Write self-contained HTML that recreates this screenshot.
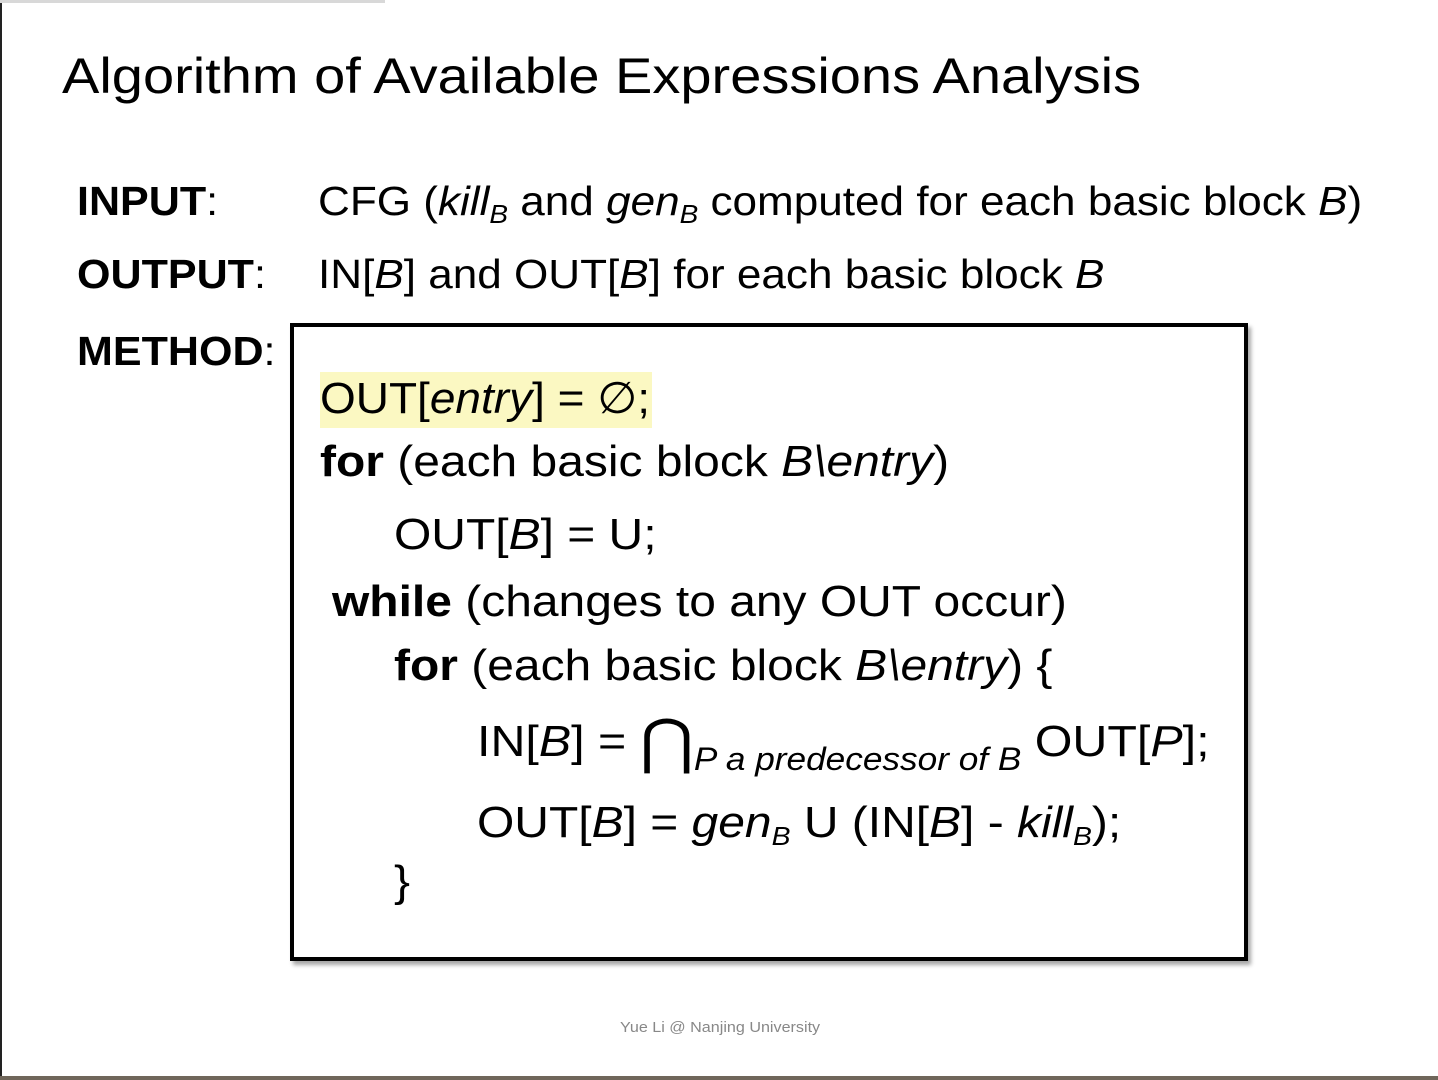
<!DOCTYPE html>
<html><head><meta charset="utf-8"><style>
body{margin:0;width:1438px;height:1080px;background:#fff;position:relative;overflow:hidden;font-family:"Liberation Sans",Arial,sans-serif;color:#000}
.a{position:absolute;white-space:nowrap;line-height:1;transform-origin:0 50%}
.t{font-size:50px;left:62px;top:51px;transform:scaleX(1.12)}
.l{font-size:41px;font-weight:bold;left:77px;transform:scaleX(1.05)}
.v{font-size:41px;left:318px;transform:scaleX(1.075)}
.c{font-size:44px;transform:scaleX(1.09)}
sub{font-size:26px;vertical-align:-8px;line-height:0}
i{font-style:italic}
</style></head><body>
<div style="position:absolute;left:0;top:0;width:2px;height:1080px;background:#222"></div>
<div style="position:absolute;left:0;top:1076px;width:1438px;height:4px;background:#6f665a"></div>
<div style="position:absolute;left:0;top:0;width:385px;height:3px;background:#d8d8d8"></div>
<div class="a t">Algorithm of Available Expressions Analysis</div>
<div class="a l" style="top:181px">INPUT<span style="font-weight:normal">:</span></div>
<div class="a v" style="top:181px">CFG (<i>kill</i><sub><i>B</i></sub> and <i>gen</i><sub><i>B</i></sub> computed for each basic block <i>B</i>)</div>
<div class="a l" style="top:254px">OUTPUT<span style="font-weight:normal">:</span></div>
<div class="a v" style="top:254px">IN[<i>B</i>] and OUT[<i>B</i>] for each basic block <i>B</i></div>
<div class="a l" style="top:331px">METHOD<span style="font-weight:normal">:</span></div>
<div style="position:absolute;left:290px;top:323px;width:950px;height:630px;border:4px solid #000;box-shadow:3px 4px 4px rgba(0,0,0,.35)"></div>
<div style="position:absolute;left:320px;top:372px;width:332px;height:56px;background:#fbf8c2"></div>
<div class="a c" style="left:320px;top:377px;transform:scaleX(1.045)">OUT[<i>entry</i>] = ∅;</div>
<div class="a c" style="left:320px;top:440px"><b>for</b> (each basic block <i>B\entry</i>)</div>
<div class="a c" style="left:394px;top:513px">OUT[<i>B</i>] = U;</div>
<div class="a c" style="left:332px;top:580px"><b>while</b> (changes to any OUT occur)</div>
<div class="a c" style="left:394px;top:644px"><b>for</b> (each basic block <i>B\entry</i>) {</div>
<div class="a c" style="left:477px;top:712px;transform:scaleX(1.1)">IN[<i>B</i>] = <span style="font-size:60px;vertical-align:-6px">⋂</span><span style="font-size:32px;vertical-align:-14px"><i>P a predecessor of B</i></span> OUT[<i>P</i>];</div>
<div class="a c" style="left:477px;top:801px">OUT[<i>B</i>] = <i>gen</i><sub><i>B</i></sub> U (IN[<i>B</i>] - <i>kill</i><sub><i>B</i></sub>);</div>
<div class="a c" style="left:394px;top:860px">}</div>
<div class="a" style="left:620px;top:1020px;font-size:15px;color:#888;transform:scaleX(1.075)">Yue Li @ Nanjing University</div>
</body></html>
